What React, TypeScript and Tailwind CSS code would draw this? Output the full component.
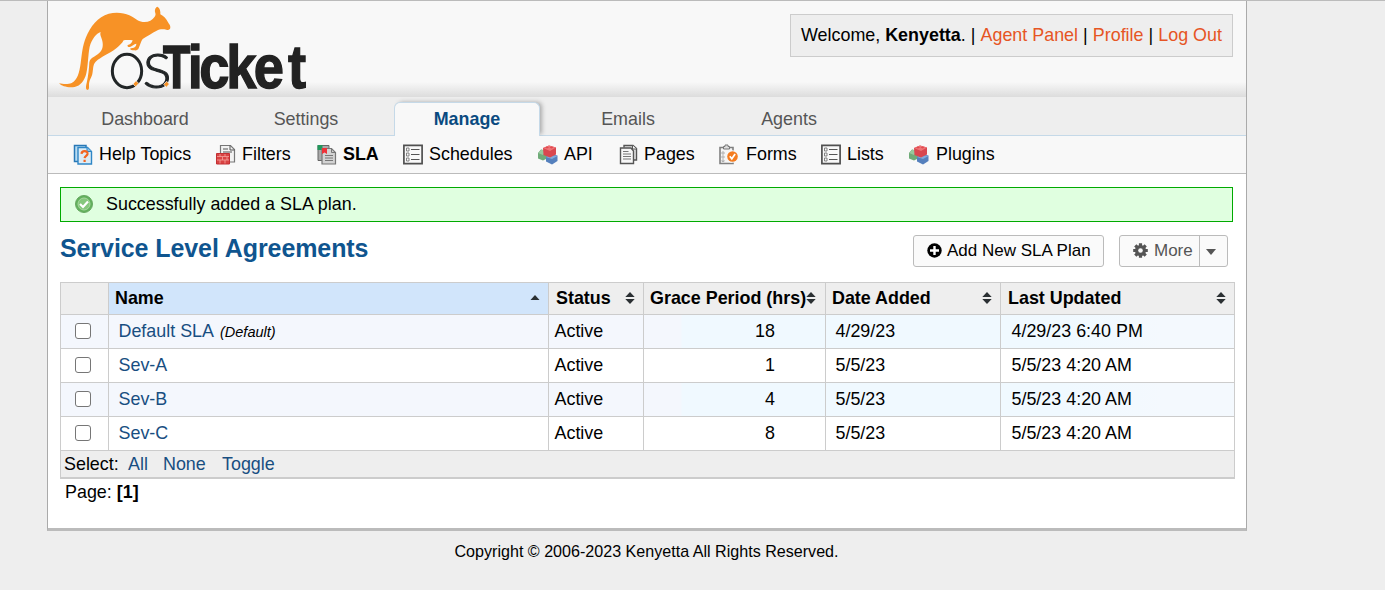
import React from "react";

function Logo() {
  return (
    <svg width="272" height="95" viewBox="24 3 816 285" className="block shrink-0 overflow-visible" aria-label="osTicket">
      <path
        fill="#f79226"
        d="M57 250 C68 252 84 254 95 249 C112 241 118 219 122 190 C126 162 127 138 138 112 C150 80 174 50 206 41 C228 36 252 38 268 46 C285 54 292 64 308 66 C324 68 336 61 344 50 C347 46 347 43 346 39 C343 31 346 22 352 20 C360 24 362 34 361 43 C371 48 379 56 384 67 C388 73 391 77 391 82 C391 89 385 91 379 89 C369 87 359 87 350 92 C337 99 322 108 308 117 C303 123 301 134 296 145 C294 150 289 152 283 151 C276 151 271 149 270 146 C274 143 281 145 285 141 C288 138 289 134 289 131 C282 132 276 139 270 141 C265 142 261 139 263 135 C270 135 276 129 278 121 C269 120 260 119 251 121 C246 130 239 137 229 145 C208 161 184 170 167 185 C158 194 160 208 157 222 C154 234 147 241 147 256 C147 263 148 270 142 270 C136 268 138 257 140 249 C145 226 147 208 148 187 C150 171 172 169 183 153 C191 141 189 126 184 113 C181 105 180 101 182 96 C169 99 155 119 149 140 C144 166 144 199 139 220 C134 242 121 258 104 261 C85 264 65 259 57 250Z"
      />
      <ellipse cx="261" cy="213" rx="44" ry="50" fill="none" stroke="#222627" strokeWidth="9" />
      <text x="308" y="265" fontFamily="Lato, sans-serif" fontWeight="300" fontSize="144" textLength="86" lengthAdjust="spacingAndGlyphs" fill="#222627" stroke="#222627" strokeWidth="3">S</text>
      <g fontFamily="'Liberation Sans', Arial, sans-serif" fontWeight="700" fill="#222222" stroke="#222222">
        <text x="506" y="265" transform="scale(.73 1)" fontSize="184" strokeWidth="5">T</text>
        <text x="501 540 631 724.500 841" y="265" transform="scale(.885 1)" fontSize="184" strokeWidth="4">icket</text>
      </g>
      <path d="M279 252l9-10 8 8-9 10zM371 253l9-9 8 8-9 10z" fill="#f79226" stroke="#f8f8f8" strokeWidth="2" />
    </svg>
  );
}

function HelpIcon() {
  return (
    <svg width="20" height="21" viewBox="0 0 20 21">
      <path d="M1.500 1.500H13v16H1.500z" fill="#b9dcf2" stroke="#2878b6" strokeWidth="1.500" />
      <path d="M5 3.500h9.500l4 4v12.500H5z" fill="#dcecf6" stroke="#2f86c6" strokeWidth="1.400" />
      <path d="M14 3.500v4h4.500" fill="#8cc3e8" stroke="#2f86c6" />
      <path d="M8.500 9.800c.3-3.800 6.500-3.500 6 .2-.3 1.900-2.600 1.900-2.900 4.200M11.600 15.800v2.200" fill="none" stroke="#f26522" strokeWidth="2.200" />
    </svg>
  );
}

function FilterIcon() {
  return (
    <svg width="20" height="21" viewBox="0 0 20 21">
      <path d="M4.500 1.500h10l4 4v12.500h-14z" fill="#f3f3f3" stroke="#777" strokeWidth="1.200" />
      <path d="M14 1.500V6h4.500M7 5h5M7 8h9" fill="none" stroke="#555" />
      <path d="M.5 9.500h13v10.500H.5z" fill="#d94343" stroke="#c22f33" />
      <path d="M1 12.500h12M1 16h12M4 10v2.500M9 10v2.500M6.500 13v3M11 13v3M4 16v3.500M9 16v3.500" stroke="#f5a39e" strokeWidth=".8" />
    </svg>
  );
}

function SlaIcon() {
  return (
    <svg width="20" height="21" viewBox="0 0 20 21">
      <path d="M1 1.500h11v15H1z" fill="#aaa" stroke="#666" />
      <path d="M.5 1h5v5h-5z" fill="#22965b" />
      <path d="M5 4.500h9.500l4 4v11.500H5z" fill="#d3d3d3" stroke="#777" strokeWidth="1.200" />
      <path d="M14.500 4.500v4h4M8 11.500h8M8 14h8M8 16.500h8" fill="none" stroke="#777" />
      <path d="M5 4h5v6L7.500 8.500 5 10z" fill="#ef3138" />
    </svg>
  );
}

function ListIcon() {
  return (
    <svg width="20" height="21" viewBox="0 0 20 21">
      <path d="M.9 1.400h18.200v18.200H.9z" fill="#f9f9f9" stroke="#505050" strokeWidth="1.700" />
      <path d="M8 5.500h8.500M8 10.500h8.500M8 15.500h8.500" stroke="#555" strokeWidth="1.200" />
      <path d="M3.500 4h2.500v3H3.500zM3.500 9h2.500v3H3.500zM3.500 14h2.500v3H3.500z" fill="none" stroke="#777" strokeWidth=".9" />
    </svg>
  );
}

function BlocksIcon() {
  return (
    <svg width="20" height="21" viewBox="0 0 20 21">
      <path d="M0 9l3-3.500 6 1.500v7.500l-4 2-5-2z" fill="#6fab78" />
      <path d="M0 9l3.500-3.500L9 7.500 5 11z" fill="#98c89d" />
      <path d="M8 13l5-3 6.500 1.500v5.500L14 20.500 8 17.500z" fill="#5580bd" />
      <path d="M8 13l6-2 5.500 1-5.500 3z" fill="#83a9da" />
      <path d="M5 4l6-2.500L18 3.500v7L12 13.500 5.500 11z" fill="#d9474f" />
      <path d="M5 4l6-2.500L18 3.500 12 7z" fill="#ee7476" />
      <path d="M7 3.500l2-1 2 1-2 1zM11.500 3.500l2-1 2 1-2 1z" fill="#e2494f" />
    </svg>
  );
}

function PagesIcon() {
  return (
    <svg width="20" height="21" viewBox="0 0 20 21">
      <path d="M5 3.500V1.500h9l3.500 3V16h-3" fill="#e4e4e4" stroke="#555" strokeWidth="1.400" />
      <path d="M13.500 1.500v3.500h4" fill="#fff" stroke="#555" />
      <path d="M1.500 4h10.500l2.500 3v12.500h-13z" fill="#f7f7f7" stroke="#555" strokeWidth="1.400" />
      <path d="M4 7.500h5.500M4 10h8M4 12.500h8M4 15h8" fill="none" stroke="#777" />
    </svg>
  );
}

function FormsIcon() {
  return (
    <svg width="20" height="21" viewBox="0 0 20 21">
      <path d="M1 3.500h13v16H1z" fill="#f5f5f5" stroke="#808080" strokeWidth="1.600" />
      <path d="M4.500 5V2.500H6V1h3v1.500h1.500V5z" fill="#ddd" stroke="#777" />
      <path d="M3 8h2v2H3zM3 12h2v2H3zM3 16h2v1.500H3z" fill="none" stroke="#aaa" strokeWidth=".9" />
      <circle cx="13.500" cy="12.500" r="6.300" fill="#f8f8f8" />
      <circle cx="13.500" cy="12.500" r="5.300" fill="#f47c20" />
      <path d="M10.800 12.300l2 2.500 3.300-4.800" fill="none" stroke="#fff" strokeWidth="1.700" />
    </svg>
  );
}

function SuccessIcon() {
  return (
    <svg width="20" height="20" viewBox="0 0 20 20" className="-mt-px shrink-0">
      <circle cx="10" cy="10" r="8.500" fill="#62b15c" stroke="#67a861" />
      <circle cx="10" cy="10" r="6" fill="#86c77d" stroke="#a8d8a0" />
      <path d="M6 10l3 3 5-5.500" fill="none" stroke="#fff" strokeWidth="2.200" />
    </svg>
  );
}

function SortIcon({ up = false }: { up?: boolean }) {
  return (
    <svg width="10" height="12" viewBox="0 0 10 12" className="-mt-px shrink-0" fill="#2b3033">
      {up ? <path d="M.5 8L5 3l4.500 5z" /> : <path d="M.3 5L5 0l4.700 5zM.3 7h9.400L5 12z" />}
    </svg>
  );
}

function PlusIcon() {
  return (
    <svg width="15" height="15" viewBox="0 0 15 15" className="-mt-[2px] shrink-0">
      <circle cx="7.500" cy="7.500" r="7.200" fill="#000" />
      <path d="M7.500 3v9M3 7.500h9" stroke="#fff" strokeWidth="2.400" />
    </svg>
  );
}

function GearIcon() {
  return (
    <svg width="15" height="15" viewBox="0 0 15 15" className="-mt-[2px] shrink-0">
      <g stroke="#555" strokeWidth="3.200">
        <path d="M7.500 .2v14.600M.2 7.500h14.600M2.300 2.300l10.400 10.400M12.700 2.300L2.300 12.700" />
      </g>
      <circle cx="7.500" cy="7.500" r="5.500" fill="#555" />
      <circle cx="7.500" cy="7.500" r="2.300" fill="#fafafa" />
    </svg>
  );
}

const tabs = ["Dashboard", "Settings", "Manage", "Emails", "Agents"];

const subnav = [
  { label: "Help Topics", icon: <HelpIcon />, box: "w-[143px] gap-[6px]" },
  { label: "Filters", icon: <FilterIcon />, box: "w-[101px] gap-[6px]" },
  { label: "SLA", icon: <SlaIcon />, box: "w-[86px] gap-[6px] font-bold" },
  { label: "Schedules", icon: <ListIcon />, box: "w-[135px] gap-[6px]" },
  { label: "API", icon: <BlocksIcon />, box: "w-[81px] gap-[6px]" },
  { label: "Pages", icon: <PagesIcon />, box: "w-[100px] gap-[5px]" },
  { label: "Forms", icon: <FormsIcon />, box: "w-[102px] gap-[7px]" },
  { label: "Lists", icon: <ListIcon />, box: "w-[88px] gap-[6px]" },
  { label: "Plugins", icon: <BlocksIcon />, box: "w-[90px] gap-[7px]" },
];

const rows = [
  { name: "Default SLA", note: "(Default)", grace: 18, added: "4/29/23", updated: "4/29/23 6:40 PM" },
  { name: "Sev-A", grace: 1, added: "5/5/23", updated: "5/5/23 4:20 AM" },
  { name: "Sev-B", grace: 4, added: "5/5/23", updated: "5/5/23 4:20 AM" },
  { name: "Sev-C", grace: 8, added: "5/5/23", updated: "5/5/23 4:20 AM" },
];

const columns = "grid grid-cols-[48px_440px_95px_182px_175px_234px]";

export default function App() {
  return (
    <div className="h-[590px] overflow-hidden border-t border-[#bbb] bg-[#eeeeee] font-['Liberation_Sans',Arial,sans-serif] text-[17.9px] leading-[20px] whitespace-nowrap text-black">
      <div className="ml-[47px] h-[530px] w-[1200px] border-x border-b-[3px] border-x-[#aaa] border-b-[#bbb] bg-white">
        <header className="flex h-[96px] items-start justify-between border-b border-[#ddd] bg-[linear-gradient(#f8f8f8_0px,#f8f8f8_81px,#dedede_95px)]">
          <Logo />
          <div className="mt-[13px] mr-[13px] flex h-[43px] w-[443px] items-center justify-between border border-[#ccc] bg-[#eeeeee] px-[10px] pb-[2px]">
            <span>Welcome, <b>Kenyetta</b>.</span>
            <span>|</span>
            <a className="text-[#e65524]">Agent Panel</a>
            <span>|</span>
            <a className="text-[#e65524]">Profile</a>
            <span>|</span>
            <a className="text-[#e65524]">Log Out</a>
          </div>
        </header>

        <nav className="flex h-[39px] items-end gap-[14px] border-b border-[#c5d9e8] bg-[#eeeeee] pl-[24px] text-[#555]">
          {tabs.map((tab) =>
            tab === "Manage" ? (
              <a key={tab} className="-mb-px h-[34px] w-[146px] rounded-t-[6px] border border-b-0 border-[#c5d9e8] bg-[#f8f8f8] pt-[6px] mr-px text-center font-bold text-[#0a4a80] shadow-[3px_-1px_4px_-1px_#aaa] [clip-path:inset(-6px_-8px_0px_0px)]">
                {tab}
              </a>
            ) : (
              <a key={tab} className="h-[34px] w-[146px] mr-px pt-[8px] text-center">{tab}</a>
            ),
          )}
        </nav>

        <div className="flex h-[38px] items-center border-b border-[#bbb] bg-[#f8f8f8] pl-[25px]">
          {subnav.map((item) => (
            <a key={item.label} className={`flex items-center ${item.box}`}>
              <span className="-mt-px">{item.icon}</span>
              <span className="pb-[2px]">{item.label}</span>
            </a>
          ))}
        </div>

        <main className="px-[12px] pt-[13px]">
          <div className="flex h-[35px] w-[1173px] items-center gap-[12px] border border-[#0a0] bg-[#e0ffe0] pl-[13px]">
            <SuccessIcon />
            <span className="pb-[2px]">Successfully added a SLA plan.</span>
          </div>

          <div className="flex h-[60px] w-[1168px] items-start pt-[12px]">
            <h1 className="text-[25px] leading-[28px] font-bold tracking-[-0.08px] text-[#0f558f]">Service Level Agreements</h1>
            <button className="mt-px ml-auto flex h-[32px] w-[191px] items-center gap-[5px] rounded-[3px] border border-[#bbb] bg-[#fafafa] pl-[13px] text-[17px]">
              <PlusIcon />
              <span className="pb-px">Add New SLA Plan</span>
            </button>
            <div className="mt-px ml-[15px] flex h-[32px] w-[109px] rounded-[3px] border border-[#bbb] bg-[#fafafa] text-[17px] text-[#555]">
              <button className="flex w-[80px] items-center gap-[6px] border-r border-[#bbb] pl-[13px]">
                <GearIcon />
                <span className="pb-px">More</span>
              </button>
              <button className="flex grow items-center justify-center pt-[2px] pr-[5px]">
                <svg width="10" height="6" viewBox="0 0 10 6"><path d="M0 0h10L5 6z" fill="#555" /></svg>
              </button>
            </div>
          </div>

          <div className="w-[1175px] border-t border-l border-[#ccc]">
            <div className={`${columns} h-[32px] font-bold *:flex *:items-center *:justify-between *:border-r *:border-b *:border-[#ccc] *:bg-[#eeeeee] [&_span]:pb-[2px]`}>
              <div />
              <div className="bg-[#d1e5fb]! pr-[8px] pl-[6px]"><span>Name</span><SortIcon up /></div>
              <div className="pr-[8px] pl-[7px]"><span>Status</span><SortIcon /></div>
              <div className="pr-[9px] pl-[6px]"><span>Grace Period (hrs)</span><SortIcon /></div>
              <div className="pr-[8px] pl-[6px]"><span>Date Added</span><SortIcon /></div>
              <div className="pr-[8px] pl-[7px]"><span>Last Updated</span><SortIcon /></div>
            </div>
            {rows.map((row, index) => (
              <div
                key={row.name}
                className={`${columns} h-[34px] *:border-r *:border-b *:border-[#ccc] *:pt-[6px] ${index % 2 === 0 ? "bg-[linear-gradient(90deg,#f4f7fd_620px,#f0f9ff_621px,#f0f9ff_1000px,#f4f9fe_1100px)]" : "bg-white"}`}
              >
                <div className="pl-[14px]">
                  <input type="checkbox" className="mt-[2px] block size-[16px] appearance-none rounded-[3px] border border-[#767676] bg-white" />
                </div>
                <div className="pl-[9.5px]">
                  <a className="text-[#184e81]">{row.name}</a>
                  {row.note && <i className="ml-[6px] text-[14.5px]">{row.note}</i>}
                </div>
                <div className="pl-[5.5px]">Active</div>
                <div className="pr-[50px] text-right">{row.grace}</div>
                <div className="pl-[9.5px]">{row.added}</div>
                <div className="pl-[10.5px]">{row.updated}</div>
              </div>
            ))}
            <div className="flex h-[28px] border-r border-b-2 border-[#ccc] bg-[#eeeeee] pt-[3px] pl-[3px]">
              <span className="w-[64px]">Select:</span>
              <a className="w-[35px] text-[#184e81]">All</a>
              <a className="w-[59px] text-[#184e81]">None</a>
              <a className="text-[#184e81]">Toggle</a>
            </div>
          </div>
          <div className="pt-[3px] pl-[5px]">Page: <b>[1]</b></div>
        </main>
      </div>
      <footer className="ml-[47px] w-[1199px] pt-[10px] text-center text-[16.1px]">
        Copyright © 2006-2023 Kenyetta All Rights Reserved.
      </footer>
    </div>
  );
}
